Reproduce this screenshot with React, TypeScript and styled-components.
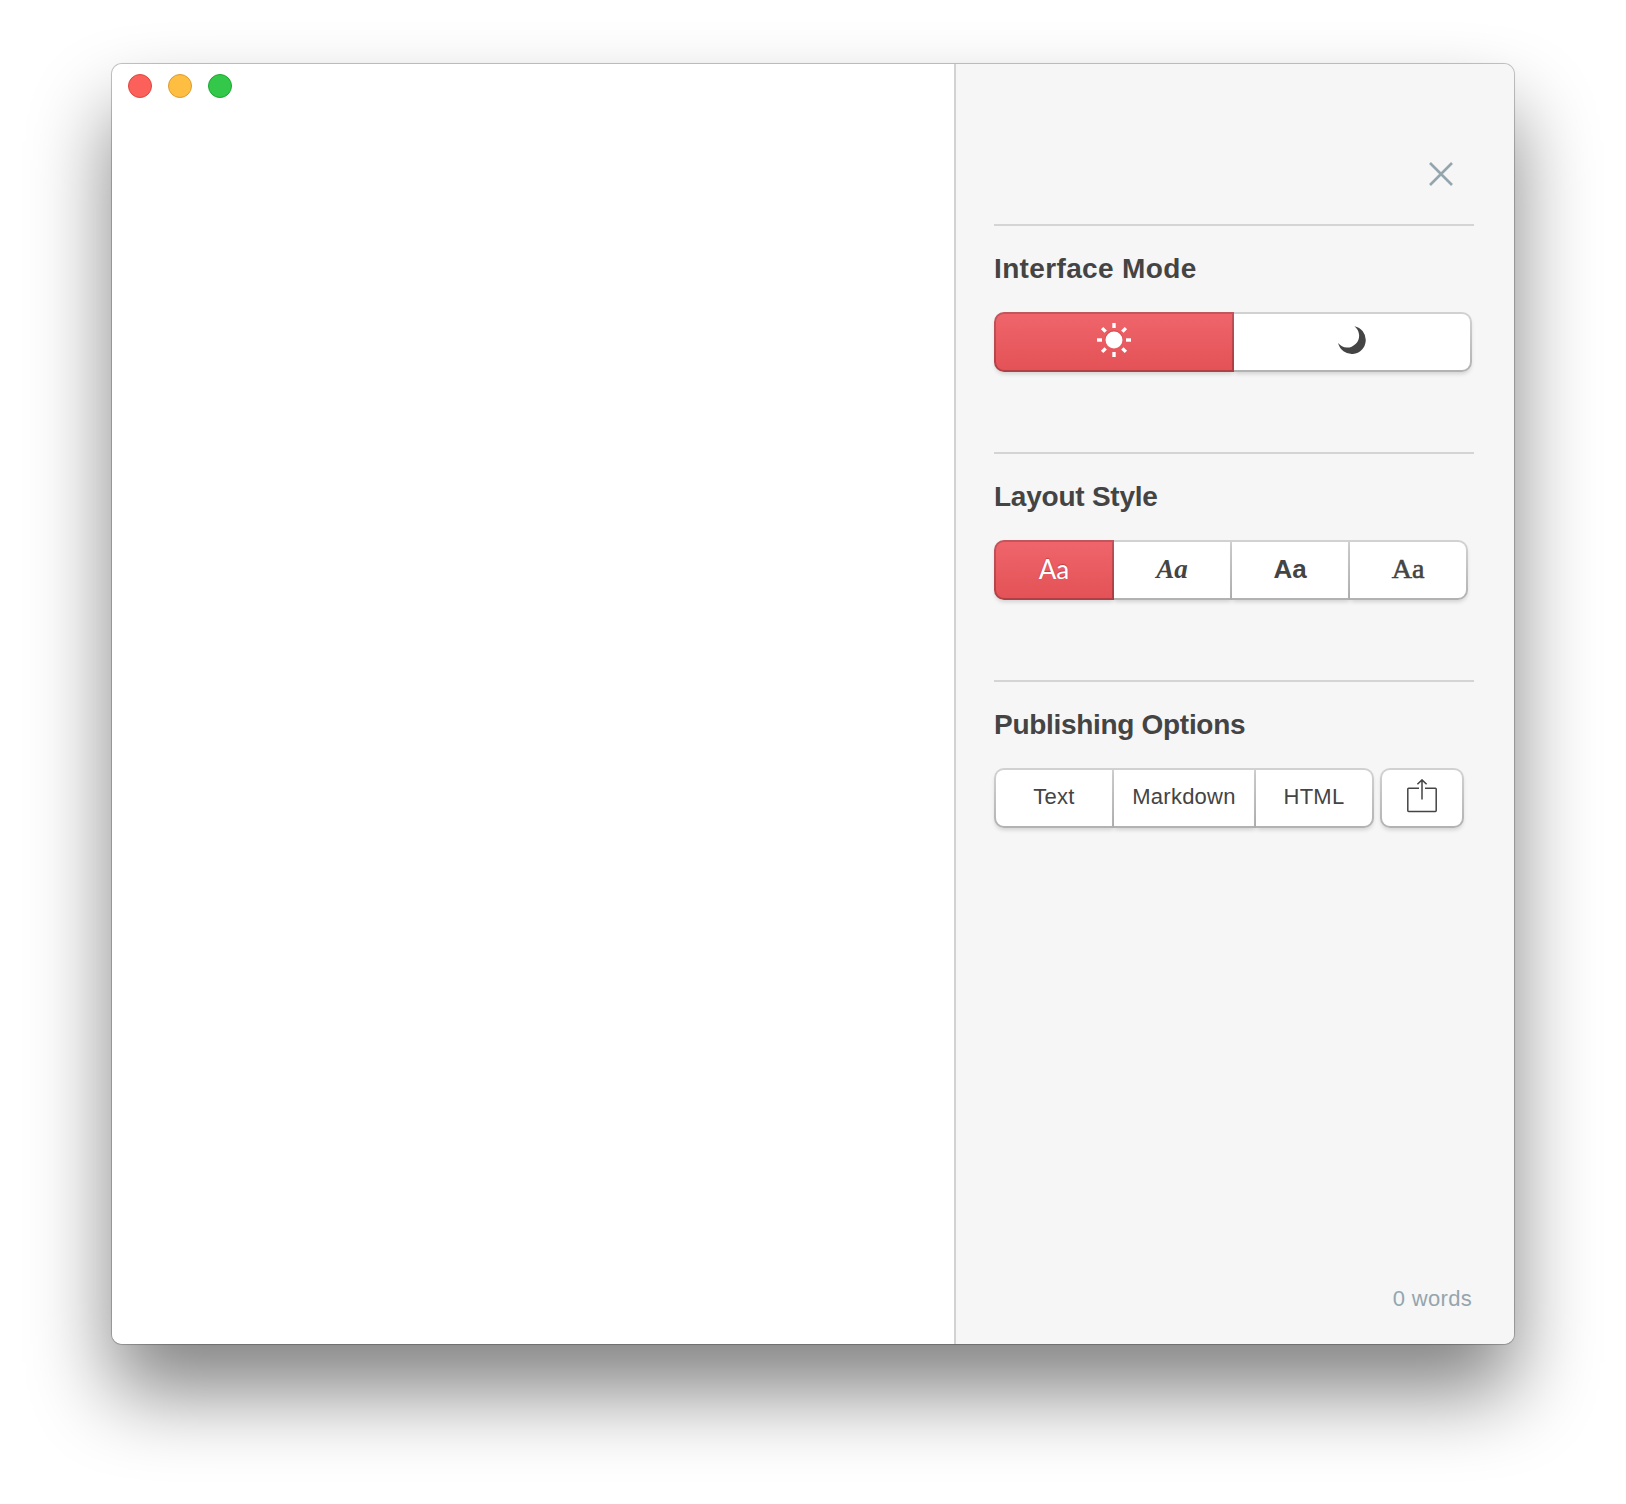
import React, { useState } from "react";
import styled, { createGlobalStyle, css } from "styled-components";

const GlobalStyle = createGlobalStyle`
  html, body { margin: 0; background: #fff; overflow: hidden; }
  *, *::before, *::after { box-sizing: border-box; }
`;

const sans = `"Liberation Sans", Arial, sans-serif`;

const Desktop = styled.div`
  width: 1626px;
  height: 1504px;
  padding: 64px 112px 160px;
  background: #fff;
  overflow: hidden;
  font-family: ${sans};
  color: #444;
`;

const Window = styled.div`
  display: flex;
  width: 1402px;
  height: 1280px;
  border-radius: 10px;
  box-shadow: 0 0 0 1px rgba(0, 0, 0, 0.18), 0 0 2px rgba(0, 0, 0, 0.2),
    0 48px 82px rgba(0, 0, 0, 0.49);
`;

const Editor = styled.main`
  flex: 1;
  background: #fff;
  border-radius: 10px 0 0 10px;
`;

const TrafficLights = styled.div`
  display: flex;
  gap: 16px;
  padding: 10px 16px;
`;

const Light = styled.span<{ $fill: string; $edge: string }>`
  width: 24px;
  height: 24px;
  border-radius: 50%;
  background: ${(p) => p.$fill};
  border: 1px solid ${(p) => p.$edge};
`;

const Sidebar = styled.aside`
  display: flex;
  flex-direction: column;
  width: 560px;
  padding: 0 40px 0 38px;
  background: #f6f6f6;
  border-left: 2px solid #d2d2d2;
  border-radius: 0 10px 10px 0;
`;

const CloseRow = styled.div`
  display: flex;
  justify-content: flex-end;
  height: 160px;
  padding: 97px 20px 0 0;
`;

const CloseButton = styled.button`
  display: flex;
  width: 26px;
  height: 26px;
  padding: 0;
  border: 0;
  background: none;
`;

const Section = styled.section`
  height: 228px;
  padding-top: 27px;
  border-top: 2px solid #d4d4d4;
`;

const Title = styled.h2<{ $spacing?: number }>`
  margin: 0 0 27px;
  font-size: 28px;
  line-height: 32px;
  font-weight: 700;
  letter-spacing: ${(p) => p.$spacing ?? 0}px;
  white-space: nowrap;
`;

const Controls = styled.div`
  display: flex;
  gap: 6px;
`;

const Group = styled.div`
  display: flex;
`;

const activeLook = css`
  color: #fff;
  text-shadow: 0 -1px 1px rgba(150, 30, 40, 0.5);
  background: linear-gradient(#ef656b, #e35256) padding-box,
    linear-gradient(#c2565c, #b03f45) border-box;
`;

const Segment = styled.button<{ $width: number; $active?: boolean; $icon?: boolean }>`
  display: flex;
  align-items: center;
  justify-content: center;
  width: ${(p) => p.$width}px;
  height: 60px;
  padding: 0 0 ${(p) => (p.$icon ? 4 : 2)}px;
  border: 2px solid transparent;
  border-left-width: 0;
  color: #444;
  font: 22px/26px ${sans};
  letter-spacing: 0.25px;
  background: linear-gradient(#fff, #fff) padding-box,
    linear-gradient(#d2d2d2, #b2b2b2) border-box;
  box-shadow: 0 3px 4px -1px rgba(0, 0, 0, 0.15);
  &:first-child {
    border-left-width: 2px;
    border-top-left-radius: 10px;
    border-bottom-left-radius: 10px;
  }
  &:last-child {
    border-top-right-radius: 10px;
    border-bottom-right-radius: 10px;
  }
  ${(p) => p.$active && activeLook}
`;

const Sample = styled.span<{
  $family: string;
  $weight?: number;
  $italic?: boolean;
  $size?: number;
  $stroke?: number;
}>`
  font-family: ${(p) => p.$family};
  font-weight: ${(p) => p.$weight ?? 400};
  font-style: ${(p) => (p.$italic ? "italic" : "normal")};
  font-size: ${(p) => p.$size ?? 26}px;
  -webkit-text-stroke: ${(p) => p.$stroke ?? 0}px currentColor;
  line-height: 30px;
  letter-spacing: 0;
`;

const Footer = styled.footer`
  display: flex;
  justify-content: flex-end;
  margin-top: auto;
  padding: 0 2px 32px 0;
  color: #95a5ae;
  font-size: 22px;
  line-height: 26px;
  letter-spacing: 0.3px;
`;

const CloseIcon = () => (
  <svg width="26" height="26" viewBox="0 0 26 26">
    <path d="M2 2 24 24M24 2 2 24" stroke="#95a5ae" strokeWidth="2.6" />
  </svg>
);

const SunIcon = () => (
  <svg width="36" height="36" viewBox="-18 -18 36 36">
    <circle r="9" cy="-1" fill="#c9434b" opacity="0.6" />
    <circle r="8.5" fill="#fff" />
    {[0, 45, 90, 135, 180, 225, 270, 315].map((a) => (
      <path
        key={a}
        d={a % 90 ? "M0-11.8V-16.8" : "M0-12V-17"}
        stroke="#fff"
        strokeWidth="3.4"
        transform={`rotate(${a})`}
      />
    ))}
  </svg>
);

const MoonIcon = () => (
  <svg width="28" height="28" viewBox="0 0 28 28">
    <path d="M16.4.2A14 14 0 1 1 .1 17.1A11.83 11.83 0 1 0 16.4.2Z" fill="#444" />
  </svg>
);

const ShareIcon = () => (
  <svg width="30" height="34" viewBox="0 0 30 34" fill="none" stroke="#444" strokeWidth="1.5">
    <path d="M12 9.2H1.6Q.8 9.2 .8 10V31.6Q.8 32.4 1.6 32.4H28.4Q29.2 32.4 29.2 31.6V10Q29.2 9.2 28.4 9.2H18" />
    <path d="M15 20.4V.9M10.4 5.3 15 .9 19.6 5.3" />
  </svg>
);

const layouts = [
  { width: 120, family: "Lato, sans-serif", size: 26 },
  { width: 118, family: `"Liberation Serif", serif`, weight: 700, italic: true, size: 27 },
  { width: 118, family: sans, weight: 700 },
  { width: 118, family: `"Liberation Serif", serif`, size: 28, stroke: 0.6 },
];

const formats = [
  { label: "Text", width: 120 },
  { label: "Markdown", width: 142 },
  { label: "HTML", width: 118 },
];

export default function App() {
  const [night, setNight] = useState(false);
  const [layout, setLayout] = useState(0);

  return (
    <Desktop>
      <GlobalStyle />
      <Window>
        <Editor>
          <TrafficLights>
            <Light $fill="#fc605b" $edge="#e0443f" />
            <Light $fill="#fdbe41" $edge="#dd9c30" />
            <Light $fill="#34c84a" $edge="#1ca631" />
          </TrafficLights>
        </Editor>
        <Sidebar>
          <CloseRow>
            <CloseButton aria-label="Close">
              <CloseIcon />
            </CloseButton>
          </CloseRow>
          <Section>
            <Title $spacing={0.36}>Interface Mode</Title>
            <Group>
              <Segment $icon $width={240} $active={!night} onClick={() => setNight(false)} aria-label="Day">
                <SunIcon />
              </Segment>
              <Segment $icon $width={238} $active={night} onClick={() => setNight(true)} aria-label="Night">
                <MoonIcon />
              </Segment>
            </Group>
          </Section>
          <Section>
            <Title $spacing={-0.24}>Layout Style</Title>
            <Group>
              {layouts.map((l, i) => (
                <Segment key={i} $width={l.width} $active={i === layout} onClick={() => setLayout(i)}>
                  <Sample
                    $family={l.family}
                    $weight={l.weight}
                    $italic={l.italic}
                    $size={l.size}
                    $stroke={l.stroke}
                  >
                    Aa
                  </Sample>
                </Segment>
              ))}
            </Group>
          </Section>
          <Section>
            <Title $spacing={-0.3}>Publishing Options</Title>
            <Controls>
              <Group>
                {formats.map((f) => (
                  <Segment key={f.label} $width={f.width}>
                    {f.label}
                  </Segment>
                ))}
              </Group>
              <Group>
                <Segment $icon $width={84} aria-label="Share">
                  <ShareIcon />
                </Segment>
              </Group>
            </Controls>
          </Section>
          <Footer>0 words</Footer>
        </Sidebar>
      </Window>
    </Desktop>
  );
}
